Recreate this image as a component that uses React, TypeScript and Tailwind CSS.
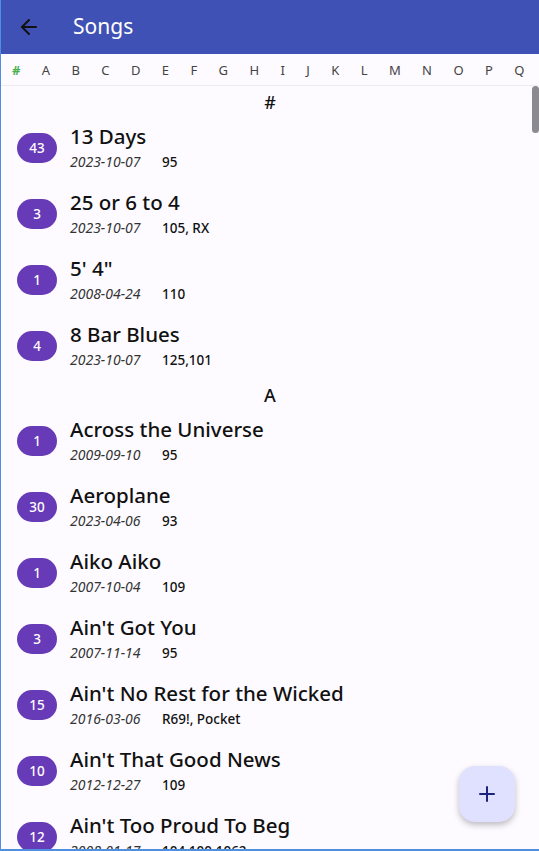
import React from "react";
import { ArrowLeft, Plus } from "lucide-react";

type Song = { count: number; title: string; date: string; tempo: string };

const sections: { key: string; songs: Song[] }[] = [
  {
    key: "#",
    songs: [
      { count: 43, title: "13 Days", date: "2023-10-07", tempo: "95" },
      { count: 3, title: "25 or 6 to 4", date: "2023-10-07", tempo: "105, RX" },
      { count: 1, title: "5' 4\"", date: "2008-04-24", tempo: "110" },
      { count: 4, title: "8 Bar Blues", date: "2023-10-07", tempo: "125,101" },
    ],
  },
  {
    key: "A",
    songs: [
      { count: 1, title: "Across the Universe", date: "2009-09-10", tempo: "95" },
      { count: 30, title: "Aeroplane", date: "2023-04-06", tempo: "93" },
      { count: 1, title: "Aiko Aiko", date: "2007-10-04", tempo: "109" },
      { count: 3, title: "Ain't Got You", date: "2007-11-14", tempo: "95" },
      { count: 15, title: "Ain't No Rest for the Wicked", date: "2016-03-06", tempo: "R69!, Pocket" },
      { count: 10, title: "Ain't That Good News", date: "2012-12-27", tempo: "109" },
      { count: 12, title: "Ain't Too Proud To Beg", date: "2008-01-17", tempo: "104,100,1062" },
    ],
  },
];

const letters = ["#", "A", "B", "C", "D", "E", "F", "G", "H", "I", "J", "K", "L", "M", "N", "O", "P", "Q"];

function Row({ s }: { s: Song }) {
  return (
    <div className="flex h-[66px] shrink-0 items-center pl-[16px]">
      <div className="flex h-[30px] w-[40px] shrink-0 items-center justify-center rounded-full bg-[#673ab7] text-[13.5px] font-medium text-white">
        {s.count}
      </div>
      <div className="ml-[13px] flex flex-col pb-[2px]">
        <div className="whitespace-nowrap text-[20.5px] font-medium leading-[26px] text-[#111]">{s.title}</div>
        <div className="mt-[3px] flex items-center whitespace-nowrap text-[14px] leading-[20px]">
          <span className="w-[92px] italic text-[#333]">{s.date}</span>
          <span className="text-[13.5px] font-medium text-[#111]">{s.tempo}</span>
        </div>
      </div>
    </div>
  );
}

export default function App() {
  return (
    <div
      className="relative flex h-[851px] w-[539px] flex-col overflow-hidden border-b-2 border-l border-[#4f8fe0] bg-[#fdfbff]"
      style={{ fontFamily: '"Noto Sans", "Open Sans", sans-serif' }}
    >
      <header className="flex h-[54px] shrink-0 items-center bg-[#3f51b5]">
        <ArrowLeft className="ml-[16px] h-[24px] w-[24px] text-[#111]" strokeWidth={2} />
        <span className="ml-[32px] text-[21px] text-white">Songs</span>
      </header>
      <nav className="flex h-[32px] shrink-0 items-center gap-[21.4px] overflow-hidden whitespace-nowrap border-b border-[#ecebf0] pl-[11px] pt-[2px] text-[13px] text-[#444]">
        {letters.map((l) => (
          <span key={l} className={l === "#" ? "font-bold text-[#4caf50]" : ""}>
            {l}
          </span>
        ))}
      </nav>
      <div className="relative flex min-h-0 flex-1 flex-col overflow-hidden">
        {sections.map((sec) => (
          <div key={sec.key} className="flex flex-col">
            <div className="flex h-[29px] shrink-0 items-center justify-center pt-[3px] text-[18px] font-medium text-[#111]">
              {sec.key}
            </div>
            {sec.songs.map((s) => (
              <Row key={s.title} s={s} />
            ))}
          </div>
        ))}
        <div className="absolute right-0 top-0 h-[47px] w-[7px] rounded-full bg-[#8b8a90]" />
      </div>
      <button className="absolute bottom-[27px] right-[24px] flex h-[56px] w-[56px] items-center justify-center rounded-2xl bg-[#e0e0ff] shadow-[0_3px_6px_rgba(0,0,0,0.25)]">
        <Plus className="h-[24px] w-[24px] text-[#1a237e]" strokeWidth={2} />
      </button>
    </div>
  );
}
